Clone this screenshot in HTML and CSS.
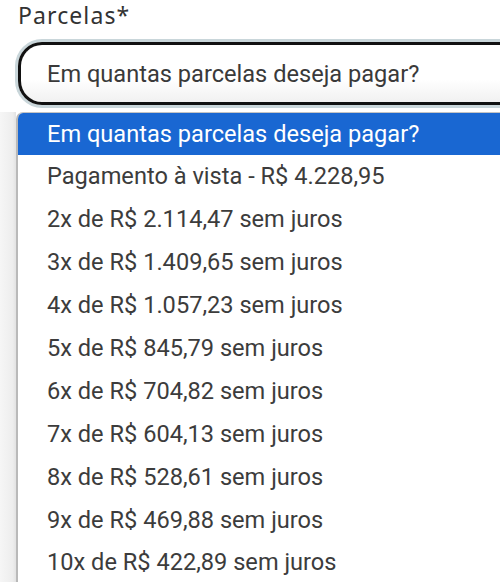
FILE: index.html
```html
<!DOCTYPE html>
<html lang="pt-BR">
<head>
<meta charset="utf-8">
<title>Parcelas</title>
<link rel="stylesheet" href="styles.css">
</head>
<body>
<div class="field">
  <label class="label">Parcelas*</label>
  <div class="select">Em quantas parcelas deseja pagar?</div>
</div>
<div class="popup-row">
  <div class="shade"></div>
  <ul class="list">
    <li class="opt active">Em quantas parcelas deseja pagar?</li>
    <li class="opt">Pagamento à vista - R$ 4.228,95</li>
    <li class="opt">2x de R$ 2.114,47 sem juros</li>
    <li class="opt">3x de R$ 1.409,65 sem juros</li>
    <li class="opt">4x de R$ 1.057,23 sem juros</li>
    <li class="opt">5x de R$ 845,79 sem juros</li>
    <li class="opt">6x de R$ 704,82 sem juros</li>
    <li class="opt">7x de R$ 604,13 sem juros</li>
    <li class="opt">8x de R$ 528,61 sem juros</li>
    <li class="opt">9x de R$ 469,88 sem juros</li>
    <li class="opt">10x de R$ 422,89 sem juros</li>
  </ul>
</div>
</body>
</html>
```
FILE: styles.css
```css
html, body {
  margin: 0;
  padding: 0;
  background: #ffffff;
  width: 500px;
  height: 582px;
  overflow: hidden;
}

.field {
  padding: 0 0 0 18px;
  display: flex;
  flex-direction: column;
}

.label {
  font-family: "Noto Sans", sans-serif;
  font-size: 23px;
  letter-spacing: 1.1px;
  line-height: 30px;
  color: #333333;
  margin-top: 0;
  height: 42px;
}

.select {
  box-sizing: border-box;
  height: 63px;
  width: 482px;
  border: 3px solid #111111;
  border-right: none;
  border-radius: 24px 0 0 24px;
  box-shadow: 0 0 0 3px #c9d6da;
  clip-path: inset(-4px 0 -4px -4px);
  background: linear-gradient(#ffffff 0%, #ffffff 60%, #f1f1f1 100%);
  font-family: Roboto, "Liberation Sans", sans-serif;
  font-size: 23.6px;
  color: #3a3a3a;
  display: flex;
  align-items: center;
  padding-left: 26px;
  white-space: nowrap;
}

.popup-row {
  display: flex;
  margin-top: 7px;
}

.shade {
  width: 16px;
  flex: none;
  background: linear-gradient(90deg, #f6f6f6 0%, #ededed 80%, #e2e2e2 100%);
  height: 480px;
}

.list {
  list-style: none;
  margin: 0;
  padding: 0;
  width: 484px;
  box-sizing: border-box;
  flex: none;
  border-left: 2px solid #b9b9b9;
  border-top: 1px solid #c4c4c4;
  border-top-left-radius: 7px;
  background: #ffffff;
  overflow: hidden;
}

.opt {
  height: 42.9px;
  display: flex;
  align-items: center;
  padding-left: 29px;
  font-family: Roboto, "Liberation Sans", sans-serif;
  font-size: 23.6px;
  color: #3c3c3c;
  white-space: nowrap;
}

.opt.active {
  background: #1967d2;
  color: #ffffff;
  height: 42px;
}
```
